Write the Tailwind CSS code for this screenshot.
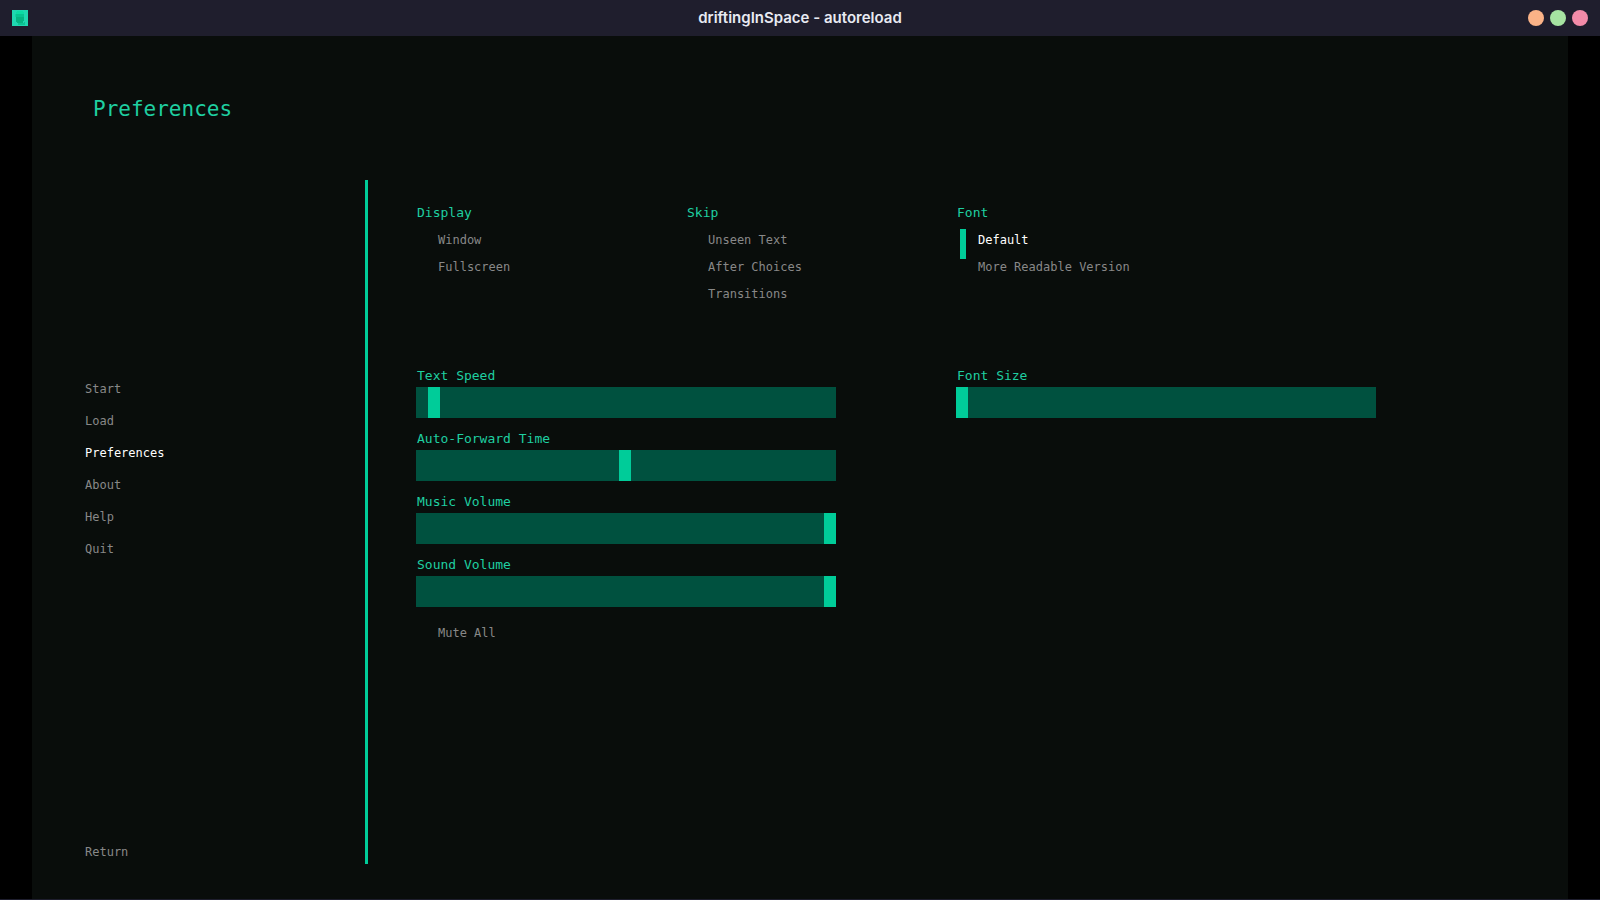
<!DOCTYPE html>
<html lang="en">
  <head>
    <meta charset="UTF-8" />
    <meta name="viewport" content="width=device-width, initial-scale=1.0" />
    <title>driftingInSpace - autoreload</title>
    <script src="https://cdn.jsdelivr.net/npm/@tailwindcss/browser@4"></script>
  </head>

  <body class="flex min-h-screen flex-col border-b border-[#1e1e2e] bg-black font-['DejaVu_Sans_Mono',monospace] text-[12px] text-[#888888]">
    <!-- Window title bar -->
    <header class="grid h-9 grid-cols-[1fr_auto_1fr] items-center bg-[#1f1e2d] px-3">
      <svg class="size-4" viewBox="0 0 16 16" shape-rendering="crispEdges" aria-hidden="true">
        <rect width="16" height="16" fill="#1fd8b0" />
        <path d="M5 1h6v1h1v2H4V2h1z" fill="#0bdca4" />
        <path d="M4 4h8v3H4z" fill="#06c491" />
        <path d="M3 4h1v3H3z" fill="#12cfa0" />
        <path d="M4 7h8v4h-1v2H5v-1H4z" fill="#04b582" />
        <path d="M6 13h6v-1h1v3H6z" fill="#0cc493" />
      </svg>
      <span class="font-[Inter,sans-serif] text-[15px] font-semibold text-[#e8eaf2]">driftingInSpace - autoreload</span>
      <div class="flex justify-end gap-1.5">
        <button class="size-4 rounded-full bg-[#fab387]" aria-label="Minimize"></button>
        <button class="size-4 rounded-full bg-[#a6e3a1]" aria-label="Maximize"></button>
        <button class="size-4 rounded-full bg-[#f38ba8]" aria-label="Close"></button>
      </div>
    </header>

    <main class="mx-8 flex flex-1 flex-col bg-[#090d0b] pb-[35px]">
      <h1 class="h-36 pt-[59px] pl-[61px] text-[21px] leading-7 text-[#1fcfa1]">Preferences</h1>

      <div class="flex flex-1">
        <!-- Game menu -->
        <aside class="flex w-[336px] shrink-0 flex-col items-start border-r-[3px] border-[#00cc99] pt-[193px] pl-[53px]">
          <nav class="flex flex-col items-start leading-8">
            <a href="#start">Start</a>
            <a href="#load">Load</a>
            <a href="#preferences" class="text-white" aria-current="page">Preferences</a>
            <a href="#about">About</a>
            <a href="#help">Help</a>
            <a href="#quit">Quit</a>
          </nav>
          <button class="mt-auto leading-6">Return</button>
        </aside>

        <section class="flex-1 pt-5 pl-12">
          <!-- Display / skip / font -->
          <div class="flex min-h-[107px] flex-wrap">
            <fieldset class="w-[270px]">
              <legend class="pl-px text-[13px] leading-[26px] text-[#1fcfa1]">Display</legend>
              <label class="flex h-[27px] items-start gap-3 pl-1 leading-[29px]">
                <input type="radio" name="display" class="mt-[3px] h-[30px] w-1.5 appearance-none checked:bg-[#00cc99]" />
                Window
              </label>
              <label class="flex h-[27px] items-start gap-3 pl-1 leading-[29px]">
                <input type="radio" name="display" class="mt-[3px] h-[30px] w-1.5 appearance-none checked:bg-[#00cc99]" />
                Fullscreen
              </label>
            </fieldset>

            <fieldset class="w-[270px]">
              <legend class="pl-px text-[13px] leading-[26px] text-[#1fcfa1]">Skip</legend>
              <label class="flex h-[27px] items-start gap-3 pl-1 leading-[29px]">
                <input type="checkbox" class="mt-[3px] h-[30px] w-1.5 appearance-none checked:bg-[#00cc99]" />
                Unseen Text
              </label>
              <label class="flex h-[27px] items-start gap-3 pl-1 leading-[29px]">
                <input type="checkbox" class="mt-[3px] h-[30px] w-1.5 appearance-none checked:bg-[#00cc99]" />
                After Choices
              </label>
              <label class="flex h-[27px] items-start gap-3 pl-1 leading-[29px]">
                <input type="checkbox" class="mt-[3px] h-[30px] w-1.5 appearance-none checked:bg-[#00cc99]" />
                Transitions
              </label>
            </fieldset>

            <fieldset class="w-[270px]">
              <legend class="pl-px text-[13px] leading-[26px] text-[#1fcfa1]">Font</legend>
              <label class="flex h-[27px] items-start gap-3 pl-1 leading-[29px] has-checked:text-white">
                <input type="radio" name="font" checked class="mt-[3px] h-[30px] w-1.5 appearance-none checked:bg-[#00cc99]" />
                Default
              </label>
              <label class="flex h-[27px] items-start gap-3 pl-1 leading-[29px] has-checked:text-white">
                <input type="radio" name="font" class="mt-[3px] h-[30px] w-1.5 appearance-none checked:bg-[#00cc99]" />
                More Readable Version
              </label>
            </fieldset>
          </div>

          <!-- Sliders -->
          <div class="mt-12 flex flex-wrap">
            <div class="flex w-[540px] flex-col">
              <label for="text-speed" class="h-8 pt-2 pl-px text-[13px] leading-[25px] text-[#1fcfa1]">Text Speed</label>
              <input id="text-speed" type="range" min="0" max="100" value="3" class="h-[31px] w-[420px] appearance-none bg-[#00513f] [&::-webkit-slider-thumb]:h-[31px] [&::-webkit-slider-thumb]:w-3 [&::-webkit-slider-thumb]:appearance-none [&::-webkit-slider-thumb]:bg-[#00cc99]" />

              <label for="auto-forward" class="h-8 pt-2 pl-px text-[13px] leading-[25px] text-[#1fcfa1]">Auto-Forward Time</label>
              <input id="auto-forward" type="range" min="0" max="100" step="any" value="49.8" class="h-[31px] w-[420px] appearance-none bg-[#00513f] [&::-webkit-slider-thumb]:h-[31px] [&::-webkit-slider-thumb]:w-3 [&::-webkit-slider-thumb]:appearance-none [&::-webkit-slider-thumb]:bg-[#00cc99]" />

              <label for="music-volume" class="h-8 pt-2 pl-px text-[13px] leading-[25px] text-[#1fcfa1]">Music Volume</label>
              <input id="music-volume" type="range" min="0" max="100" value="100" class="h-[31px] w-[420px] appearance-none bg-[#00513f] [&::-webkit-slider-thumb]:h-[31px] [&::-webkit-slider-thumb]:w-3 [&::-webkit-slider-thumb]:appearance-none [&::-webkit-slider-thumb]:bg-[#00cc99]" />

              <label for="sound-volume" class="h-8 pt-2 pl-px text-[13px] leading-[25px] text-[#1fcfa1]">Sound Volume</label>
              <input id="sound-volume" type="range" min="0" max="100" value="100" class="h-[31px] w-[420px] appearance-none bg-[#00513f] [&::-webkit-slider-thumb]:h-[31px] [&::-webkit-slider-thumb]:w-3 [&::-webkit-slider-thumb]:appearance-none [&::-webkit-slider-thumb]:bg-[#00cc99]" />

              <label class="mt-3 flex h-[27px] items-start gap-3 pl-1 leading-[29px] has-checked:text-white">
                <input type="checkbox" class="mt-[3px] h-[30px] w-1.5 appearance-none checked:bg-[#00cc99]" />
                Mute All
              </label>
            </div>

            <div class="flex w-[540px] flex-col">
              <label for="font-size" class="h-8 pt-2 pl-px text-[13px] leading-[25px] text-[#1fcfa1]">Font Size</label>
              <input id="font-size" type="range" min="0" max="100" value="0" class="h-[31px] w-[420px] appearance-none bg-[#00513f] [&::-webkit-slider-thumb]:h-[31px] [&::-webkit-slider-thumb]:w-3 [&::-webkit-slider-thumb]:appearance-none [&::-webkit-slider-thumb]:bg-[#00cc99]" />
            </div>
          </div>
        </section>
      </div>
    </main>
  </body>
</html>
